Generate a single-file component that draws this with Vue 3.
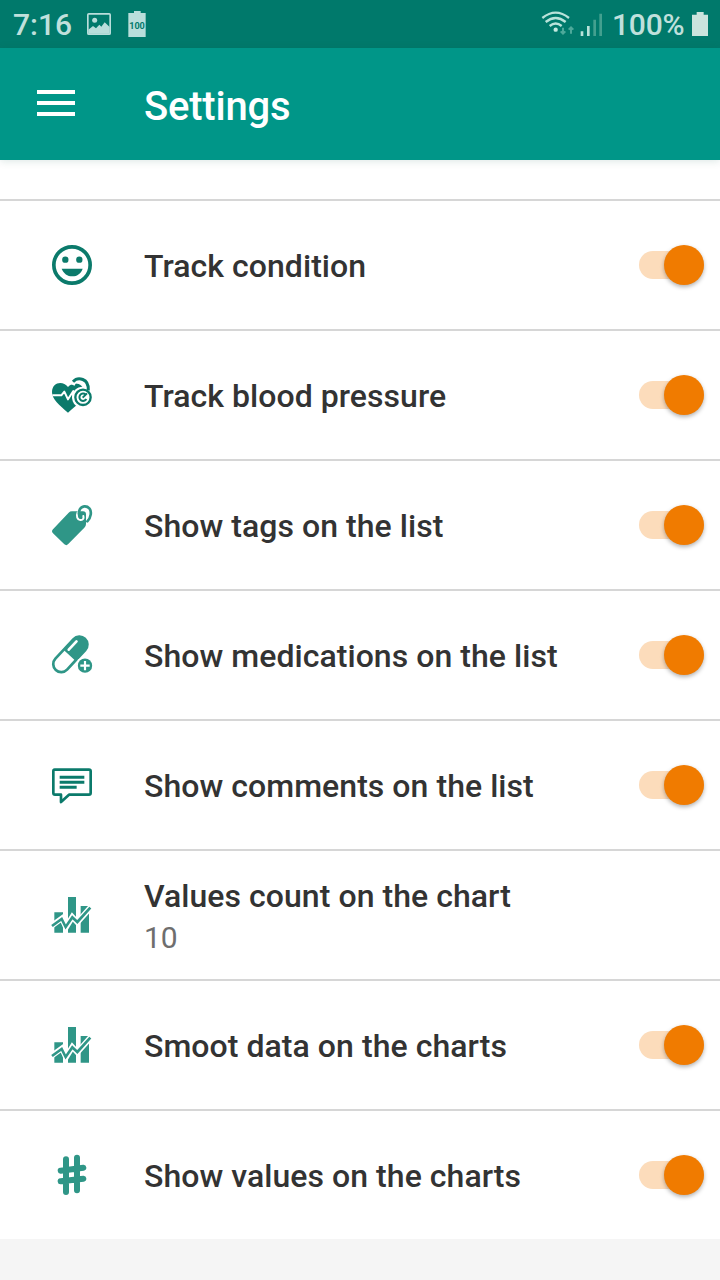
<script setup>
const rows = [
  { icon: 'smile', title: 'Track condition', on: true },
  { icon: 'heart', title: 'Track blood pressure', on: true },
  { icon: 'tag', title: 'Show tags on the list', on: true },
  { icon: 'pill', title: 'Show medications on the list', on: true },
  { icon: 'comment', title: 'Show comments on the list', on: true },
  { icon: 'chart', title: 'Values count on the chart', value: '10' },
  { icon: 'chart', title: 'Smoot data on the charts', on: true },
  { icon: 'hash', title: 'Show values on the charts', on: true },
]
</script>

<template>
  <div class="screen">
    <div class="status">
      <span class="time">7:16</span>
      <svg class="picture" width="24" height="22" viewBox="0 0 72 66">
        <rect x="2.5" y="2.5" width="67" height="61" rx="3" fill="none" stroke="#b9dedb" stroke-width="5" />
        <circle cx="23" cy="22" r="7.5" fill="#b9dedb" />
        <path d="M4 50 L18 39 L27 46 L37 35 L43 41 L53 28 L68 42 V62 H4Z" fill="#b9dedb" />
      </svg>
      <svg class="batt-note" width="18" height="26" viewBox="0 0 54 78">
        <path d="M18 0H38V6H53V78H1V6H18Z" fill="#b9dedb" />
        <text x="27" y="53" text-anchor="middle" textLength="47" lengthAdjust="spacingAndGlyphs" font-size="28" font-weight="700" fill="#00796b">100</text>
      </svg>
      <span class="gap"></span>
      <svg class="signal" width="62" height="26" viewBox="0 0 186 78">
        <g fill="none" stroke="#b9e3da" stroke-width="7">
          <path d="M7 21Q47-11 87 21" />
          <path d="M17 33Q47 9 77 33" />
          <path d="M29 45Q47 30 65 45" />
        </g>
        <circle cx="47" cy="56" r="6.5" fill="#c4e9e0" />
        <g fill="none" stroke="#4da99a" stroke-width="6">
          <path d="M69 50V69M62 61L69 68L76 61" />
          <path d="M93 68V49M86 56L93 49L100 56" />
        </g>
        <path d="M122 61h8v14h-8zM141 45h8v30h-8z" fill="#b9e3da" />
        <path d="M160 26h8v49h-8zM178 8h8v67h-8z" fill="#43a08f" />
      </svg>
      <span class="percent">100%</span>
      <svg class="battery" width="16" height="24" viewBox="0 0 48 72">
        <path d="M14 0H35V8H48V72H0V8H14Z" fill="#cbe4dd" />
      </svg>
    </div>
    <header class="bar">
      <svg class="menu" width="38" height="28" viewBox="0 0 38 28">
        <path d="M0 3H38M0 14H38M0 25H38" stroke="#fff" stroke-width="4" />
      </svg>
      <h1>Settings</h1>
    </header>
    <main>
      <div class="row" v-for="row in rows" :key="row.title">
        <svg class="icon" width="64" height="60" viewBox="0 0 192 180">
          <g v-if="row.icon === 'smile'" fill="#0b7a6b">
            <circle cx="96" cy="90" r="54.5" fill="none" stroke="#0b7a6b" stroke-width="11" />
            <circle cx="76" cy="74" r="9.5" />
            <circle cx="118" cy="74" r="9.5" />
            <path d="M65 101H128C123 115 112 124 97 124S71 116 65 101Z" />
          </g>
          <g v-else-if="row.icon === 'heart'">
            <path d="M84 66C68 46 36 52 36 82C36 103 58 121 84 143C108 123 132 104 132 82C132 52 98 48 84 66Z" fill="#0b7a6b" />
            <circle cx="128" cy="97" r="32" fill="#fff" />
            <path d="M96 59C108 30 148 38 148 76" fill="none" stroke="#fff" stroke-width="17" />
            <path d="M99 50C114 34 147 40 145 76" fill="none" stroke="#0b7a6b" stroke-width="9" />
            <path d="M37 91H64L73 80L84 103L100 78V98" fill="none" stroke="#fff" stroke-width="6" stroke-linejoin="round" />
            <circle cx="129" cy="97" r="23" fill="none" stroke="#0b7a6b" stroke-width="7" />
            <path d="M137 89A11 11 0 1 0 139 102" fill="none" stroke="#0b7a6b" stroke-width="6" />
            <path d="M128 98L141 85" stroke="#0b7a6b" stroke-width="6" />
          </g>
          <g v-else-if="row.icon === 'tag'">
            <path d="M39 103L86 53Q90 49 96 49H129Q138 49 138 58V87Q138 93 133 98L84 148Q79 153 73 148L39 115Q33 109 39 103Z" fill="#2f9687" />
            <path d="M113 52C108 64 112 74 121 75C129 76 132 70 130 63" fill="none" stroke="#fff" stroke-width="6" stroke-linecap="round" />
            <path d="M121 67C115 60 116 51 119 44C125 32 140 31 148 40C156 49 153 68 142 79" fill="none" stroke="#2f9687" stroke-width="8" stroke-linecap="round" />
          </g>
          <g v-else-if="row.icon === 'pill'">
            <g transform="rotate(-47 91 88)">
              <rect x="23" y="60" width="136" height="56" rx="28" fill="#2f9687" />
              <path d="M87 68H51a20 20 0 0 0 0 40H87Z" fill="#fff" />
              <path d="M98 75H132" stroke="#fff" stroke-width="8" stroke-linecap="round" />
            </g>
            <circle cx="135" cy="122" r="27" fill="#fff" />
            <circle cx="135" cy="122" r="21.5" fill="#2f9687" />
            <path d="M121 122H149M135 108V136" stroke="#fff" stroke-width="6.5" />
          </g>
          <g v-else-if="row.icon === 'comment'" fill="none" stroke="#0b7a6b" stroke-width="8">
            <path d="M44 44H147Q152 44 152 49V114Q152 119 147 119H87L63 141V119H45Q40 119 40 114V49Q40 44 44 44Z" stroke-linejoin="round" />
            <path d="M59 67H133M59 82H133M59 97H110" stroke-width="9" />
          </g>
          <g v-else-if="row.icon === 'chart'">
            <path d="M43 82H69V143H43ZM84 36H108V143H84ZM122 63H147V143H122Z" fill="#2f9687" />
            <path d="M33 124L66 100L78 127L97 96L112 112L153 66" fill="none" stroke="#fff" stroke-width="17" />
            <path d="M36 123L65 102L77 126L97 97L112 111L151 68" fill="none" stroke="#2f9687" stroke-width="8" />
          </g>
          <g v-else fill="none" stroke="#2f9687" stroke-width="18" stroke-linecap="round">
            <path d="M78 43V141M111 38V136M62 77L130 68M62 109L130 101" />
          </g>
        </svg>
        <div class="text">
          <div class="title">{{ row.title }}</div>
          <div v-if="row.value" class="value">{{ row.value }}</div>
        </div>
        <div v-if="row.on" class="switch"><span class="thumb"></span></div>
      </div>
    </main>
  </div>
</template>

<style>
body {
  background: #f5f5f5;
}
</style>

<style scoped>
.screen {
  width: 720px;
  height: 1280px;
  overflow: hidden;
  background: #f5f5f5;
  font-family: Roboto, sans-serif;
}
.status {
  display: flex;
  height: 48px;
  box-sizing: border-box;
  padding: 0 12px 0 13px;
  background: #00796b;
  color: #c0e0dc;
  font-size: 30px;
  font-weight: 500;
  line-height: 50px;
}
.time {
  width: 74px;
}
.picture {
  margin-top: 13px;
}
.batt-note {
  margin: 11px 0 0 17px;
}
.gap {
  flex: 1;
}
.signal {
  margin: 11px 10px 0 0;
}
.percent {
  width: 75px;
  margin-right: 5px;
  letter-spacing: -0.2px;
}
.battery {
  margin-top: 12px;
}
.bar {
  position: relative;
  display: flex;
  height: 112px;
  background: #009688;
  box-shadow: 0 1px 8px rgba(0, 80, 70, 0.15);
}
.menu {
  margin: 41px 69px 0 37px;
}
h1 {
  margin: 0;
  color: #fff;
  font-size: 40px;
  font-weight: 500;
  line-height: 118px;
  letter-spacing: -0.2px;
}
main {
  padding-top: 39px;
  background: #fff;
}
.row {
  display: flex;
  align-items: center;
  height: 130px;
  box-sizing: border-box;
  border-top: 2px solid #d6d6d6;
  padding: 0 16px 0 40px;
}
.text {
  flex: 1;
  margin-left: 40px;
}
.title {
  color: #333;
  font-size: 32px;
  font-weight: 500;
  line-height: 42px;
  padding-top: 2px;
  letter-spacing: 0.05px;
  white-space: nowrap;
}
.value {
  position: relative;
  top: 1px;
  color: #6e6e6e;
  font-size: 30px;
  line-height: 40px;
}
.switch {
  display: flex;
  justify-content: flex-end;
  align-items: center;
  width: 65px;
  height: 28px;
  border-radius: 14px;
  background: #fcdcbb;
}
.thumb {
  width: 40px;
  height: 40px;
  border-radius: 50%;
  background: #f07b00;
  box-shadow: 0 2px 4px rgba(0, 0, 0, 0.3);
}
</style>
